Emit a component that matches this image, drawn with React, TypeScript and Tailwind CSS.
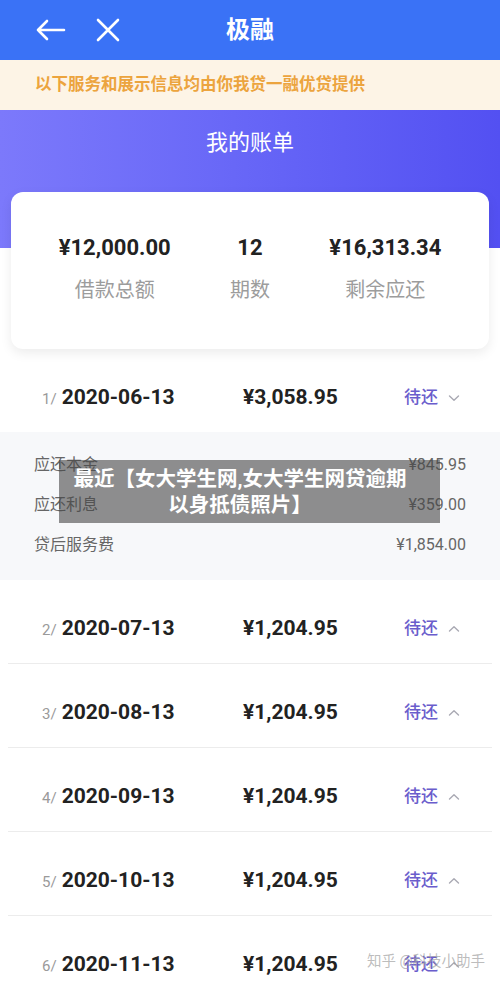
import React from "react";

const font = { fontFamily: "Roboto, 'Noto Sans CJK SC', sans-serif" };

function Chevron({ up }: { up: boolean }) {
  return (
    <svg width="14" height="10" viewBox="0 0 14 10" className="ml-[9px]">
      {up ? (
        <path d="M2.5 7 L7 2.8 L11.5 7" fill="none" stroke="#a9a9b3" strokeWidth="1.4" strokeLinecap="round" strokeLinejoin="round" />
      ) : (
        <path d="M2.5 3 L7 7.2 L11.5 3" fill="none" stroke="#a9a9b3" strokeWidth="1.4" strokeLinecap="round" strokeLinejoin="round" />
      )}
    </svg>
  );
}

function Row({ n, date, amount, up, divider }: { n: number; date: string; amount: string; up: boolean; divider: boolean }) {
  return (
    <div className="mx-[8px]">
      <div className="h-[83px] pt-[14px] flex items-center">
        <div className="w-[235px] flex items-baseline pl-[34px]">
          <span className="text-[15px] text-[#9a9a9a] mr-[5px]">{n}/</span>
          <span className="text-[21px] font-bold text-[#222]">{date}</span>
        </div>
        <div className="w-[161px] text-[21px] font-bold text-[#222]">{amount}</div>
        <div className="flex items-center">
          <span className="text-[17px] font-medium text-[#6a5dcc]">待还</span>
          <Chevron up={up} />
        </div>
      </div>
      {divider && <div className="h-px bg-[#ececec]" />}
    </div>
  );
}

export default function App() {
  return (
    <div className="relative w-[500px] h-[983px] overflow-hidden bg-white" style={font}>
      {/* header */}
      <div className="h-[60px] bg-[#3a72f6] flex items-center relative">
        <svg width="32" height="26" viewBox="0 0 32 26" className="ml-[34px]">
          <path d="M30 13 H4 M13 4 L4 13 L13 22" fill="none" stroke="white" strokeWidth="2.6" strokeLinecap="round" strokeLinejoin="round" />
        </svg>
        <svg width="26" height="26" viewBox="0 0 26 26" className="ml-[29px]">
          <path d="M3 3 L23 23 M23 3 L3 23" fill="none" stroke="white" strokeWidth="2.6" strokeLinecap="round" />
        </svg>
        <div className="absolute inset-0 flex items-center justify-center pointer-events-none">
          <span className="text-[24px] font-bold text-white">极融</span>
        </div>
      </div>
      {/* notice */}
      <div className="h-[50px] bg-[#fdf4e6] flex items-center pl-[35px]">
        <span className="text-[16.5px] font-bold text-[#eca43e]">以下服务和展示信息均由你我贷一融优贷提供</span>
      </div>
      {/* gradient */}
      <div className="h-[138px] bg-gradient-to-r from-[#7c79fb] to-[#5350f2] flex justify-center pt-[17px]">
        <span className="text-[22px] text-white leading-[32px]">我的账单</span>
      </div>
      {/* card */}
      <div className="-mt-[56px] mx-[11px] h-[157px] bg-white rounded-[12px] shadow-[0_4px_12px_rgba(0,0,0,0.08)] grid grid-cols-3 px-[36px] pt-[40px] relative">
        {[
          ["¥12,000.00", "借款总额"],
          ["12", "期数"],
          ["¥16,313.34", "剩余应还"],
        ].map(([v, l]) => (
          <div key={l} className="flex flex-col items-center">
            <span className="text-[22px] font-bold text-[#222] leading-[32px]">{v}</span>
            <span className="text-[20px] text-[#9c9c9c] mt-[10px] leading-[32px]">{l}</span>
          </div>
        ))}
      </div>
      {/* rows */}
      <Row n={1} date="2020-06-13" amount="¥3,058.95" up={false} divider={false} />
      <div className="h-[148px] bg-[#f7f8fa] px-[34px] pt-[21px] flex flex-col gap-[16px]">
        {[
          ["应还本金", "¥845.95"],
          ["应还利息", "¥359.00"],
          ["贷后服务费", "¥1,854.00"],
        ].map(([l, v]) => (
          <div key={l} className="flex justify-between h-[24px] items-center text-[16px] text-[#666]">
            <span>{l}</span>
            <span>{v}</span>
          </div>
        ))}
      </div>
      <Row n={2} date="2020-07-13" amount="¥1,204.95" up={true} divider={true} />
      <Row n={3} date="2020-08-13" amount="¥1,204.95" up={true} divider={true} />
      <Row n={4} date="2020-09-13" amount="¥1,204.95" up={true} divider={true} />
      <Row n={5} date="2020-10-13" amount="¥1,204.95" up={true} divider={true} />
      <Row n={6} date="2020-11-13" amount="¥1,204.95" up={true} divider={false} />

      {/* overlay caption */}
      <div className="absolute left-[59px] top-[460px] w-[381px] h-[63px] bg-[rgba(70,70,70,0.6)] flex items-center">
        <div className="w-[362px] text-center text-[20.5px] font-bold text-white leading-[26px] whitespace-nowrap">
          最近【女大学生网,女大学生网贷逾期
          <br />
          以身抵债照片】
        </div>
      </div>
      {/* watermark */}
      <div className="absolute left-[367px] top-[951px] text-[14.5px] text-[rgba(160,160,160,0.7)] leading-[22px] whitespace-nowrap">
        知乎 @科技小助手
      </div>
    </div>
  );
}
